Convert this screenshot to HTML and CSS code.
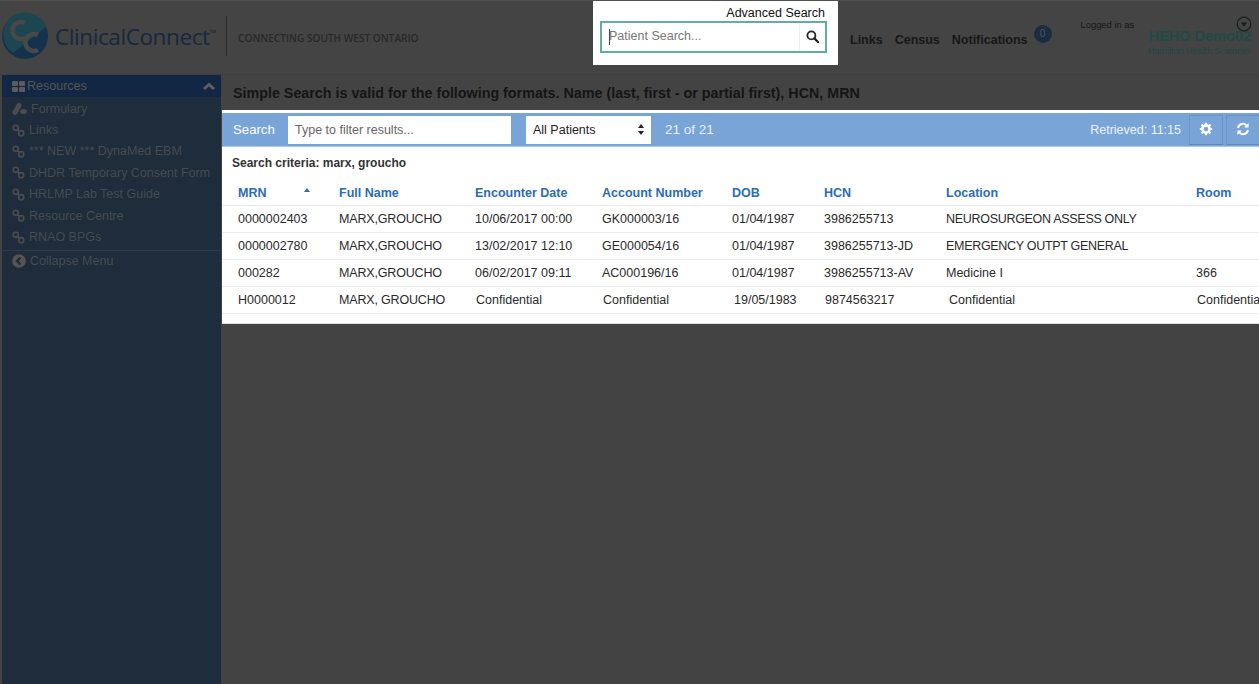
FILE: index.html
```html
<!DOCTYPE html>
<html lang="en">
<head>
    <meta charset="UTF-8">
    <title>ClinicalConnect</title>
    <link rel="stylesheet" href="styles.css">
</head>
<body>
    <header class="topbar">
        <div class="brand">
            <svg class="brand-logo" width="48" height="48" viewBox="0 0 48 48">
                <circle cx="24" cy="24" r="23" fill="#14324c"/>
                <path d="M8 7 A23 23 0 0 1 45 15 L12 41 A23 23 0 0 1 8 7Z" fill="#1c4750"/>
                <path d="M24 11 A8.5 8.5 0 1 0 24 26" fill="none" stroke="#484848" stroke-width="4.5"/>
                <path d="M37 23 A8.5 8.5 0 1 0 37 38" fill="none" stroke="#484848" stroke-width="4.5"/>
            </svg>
            <span class="brand-name">ClinicalConnect<sup>™</sup></span>
            <span class="brand-tag">CONNECTING SOUTH WEST ONTARIO</span>
        </div>

        <div class="search-box">
            <a class="advanced-link">Advanced Search</a>
            <div class="search-field">
                <span class="caret"></span>
                <input type="text" placeholder="Patient Search...">
                <button class="search-btn">
                    <svg width="13" height="13" viewBox="0 0 13 13"><circle cx="5.4" cy="5.4" r="4" fill="none" stroke="#222" stroke-width="1.8"/><path d="M8.4 8.4 L12 12" stroke="#222" stroke-width="2.2" stroke-linecap="round"/></svg>
                </button>
            </div>
        </div>

        <nav class="top-nav">
            <a>Links</a>
            <a>Census</a>
            <a>Notifications</a>
            <span class="badge">0</span>
        </nav>

        <div class="user">
            <span class="logged">Logged in as</span>
            <div class="user-info">
                <svg class="user-caret" width="16" height="16" viewBox="0 0 16 16"><circle cx="8" cy="8" r="6.8" fill="none" stroke="#1c1c1c" stroke-width="1.2"/><path d="M4.6 6.4 H11.4 L8 10.4Z" fill="#1c1c1c"/></svg>
                <span class="user-name">HEHO Demo02</span>
                <span class="user-org">Hamilton Health Sciences</span>
            </div>
        </div>
    </header>

    <div class="layout">
        <aside class="sidebar">
            <div class="side-head">
                <svg width="13" height="11" viewBox="0 0 13 11" fill="#5c5c5c"><rect width="6" height="5" rx="1"/><rect x="7" width="6" height="5" rx="1"/><rect y="6" width="6" height="5" rx="1"/><rect x="7" y="6" width="6" height="5" rx="1"/></svg>
                <span>Resources</span>
                <svg class="side-chevron" width="14" height="9" viewBox="0 0 14 9"><path d="M2 7 L7 2.5 L12 7" fill="none" stroke="#5f5f5f" stroke-width="3"/></svg>
            </div>
            <ul class="side-list">
                <li>
                    <svg width="15" height="13" viewBox="0 0 15 13" fill="#4c4c4c"><path d="M1 9 L5 2 A2.4 2.4 0 0 1 9 5 L5 12 A2.4 2.4 0 0 1 1 9Z"/><ellipse cx="11.5" cy="9.5" rx="3.4" ry="2.6"/></svg>
                    Formulary
                </li>
                <li><svg width="13" height="13" viewBox="0 0 13 13"><use href="#rings"/></svg>Links</li>
                <li><svg width="13" height="13" viewBox="0 0 13 13"><use href="#rings"/></svg>*** NEW *** DynaMed EBM</li>
                <li><svg width="13" height="13" viewBox="0 0 13 13"><use href="#rings"/></svg>DHDR Temporary Consent Form</li>
                <li><svg width="13" height="13" viewBox="0 0 13 13"><use href="#rings"/></svg>HRLMP Lab Test Guide</li>
                <li><svg width="13" height="13" viewBox="0 0 13 13"><use href="#rings"/></svg>Resource Centre</li>
                <li><svg width="13" height="13" viewBox="0 0 13 13"><use href="#rings"/></svg>RNAO BPGs</li>
            </ul>
            <div class="side-collapse">
                <svg width="14" height="14" viewBox="0 0 14 14"><circle cx="7" cy="7" r="6.8" fill="#545454"/><path d="M8.4 3.6 L5 7 L8.4 10.4" fill="none" stroke="#1f2c3b" stroke-width="2.2"/></svg>
                Collapse Menu
            </div>
        </aside>

        <main class="content">
            <h1 class="notice">Simple Search is valid for the following formats. Name (last, first - or partial first), HCN, MRN</h1>

            <section class="results">
                <div class="toolbar">
                    <span class="toolbar-label">Search</span>
                    <input class="filter" type="text" placeholder="Type to filter results...">
                    <div class="select">
                        All Patients
                        <svg width="6" height="11" viewBox="0 0 6 11" fill="#222"><path d="M3 0 L6 4 H0Z"/><path d="M3 11 L6 7 H0Z"/></svg>
                    </div>
                    <span class="count">21 of 21</span>
                    <span class="retrieved">Retrieved: 11:15</span>
                    <button class="tool-btn">
                        <svg width="14" height="14" viewBox="0 0 14 14"><circle cx="7" cy="7" r="3.6" fill="none" stroke="#fff" stroke-width="2.6"/><path d="M7 .8 V3 M7 11 V13.2 M.8 7 H3 M11 7 H13.2 M2.6 2.6 L4.2 4.2 M9.8 9.8 L11.4 11.4 M2.6 11.4 L4.2 9.8 M9.8 4.2 L11.4 2.6" stroke="#fff" stroke-width="2.2"/></svg>
                    </button>
                    <button class="tool-btn">
                        <svg width="14" height="14" viewBox="0 0 14 14" fill="none" stroke="#fff" stroke-width="2"><path d="M2 6 A5 5 0 0 1 11 4"/><path d="M12 8 A5 5 0 0 1 3 10"/><path d="M12.6 1 V5.4 H8.2Z" fill="#fff" stroke="none"/><path d="M1.4 13 V8.6 H5.8Z" fill="#fff" stroke="none"/></svg>
                    </button>
                </div>

                <p class="criteria">Search criteria: marx, groucho</p>

                <table class="grid">
                    <colgroup>
                        <col class="c-mrn"><col class="c-name"><col class="c-date"><col class="c-acct">
                        <col class="c-dob"><col class="c-hcn"><col class="c-loc"><col class="c-room">
                    </colgroup>
                    <thead>
                        <tr>
                            <th>MRN<svg class="sort-mark" width="6" height="4" viewBox="0 0 6 4" fill="#2a6db5"><path d="M3 0 L6 4 H0Z"/></svg></th>
                            <th>Full Name</th>
                            <th>Encounter Date</th>
                            <th>Account Number</th>
                            <th>DOB</th>
                            <th>HCN</th>
                            <th>Location</th>
                            <th>Room</th>
                        </tr>
                    </thead>
                    <tbody>
                        <tr>
                            <td>0000002403</td><td class="caps">MARX,GROUCHO</td><td>10/06/2017 00:00</td><td>GK000003/16</td>
                            <td>01/04/1987</td><td>3986255713</td><td class="caps-loc">NEUROSURGEON ASSESS ONLY</td><td></td>
                        </tr>
                        <tr>
                            <td>0000002780</td><td class="caps">MARX,GROUCHO</td><td>13/02/2017 12:10</td><td>GE000054/16</td>
                            <td>01/04/1987</td><td>3986255713-JD</td><td class="caps-loc">EMERGENCY OUTPT GENERAL</td><td></td>
                        </tr>
                        <tr>
                            <td>000282</td><td class="caps">MARX,GROUCHO</td><td>06/02/2017 09:11</td><td>AC000196/16</td>
                            <td>01/04/1987</td><td>3986255713-AV</td><td>Medicine I</td><td>366</td>
                        </tr>
                        <tr class="row-conf">
                            <td>H0000012</td><td class="caps">MARX, GROUCHO</td><td>Confidential</td><td>Confidential</td>
                            <td>19/05/1983</td><td>9874563217</td><td>Confidential</td><td>Confidential</td>
                        </tr>
                    </tbody>
                </table>
            </section>
        </main>
    </div>

    <svg width="0" height="0" class="defs">
        <defs>
            <g id="rings" fill="none" stroke="#4c4c4c" stroke-width="1.6">
                <circle cx="3.8" cy="3.8" r="2.6"/>
                <circle cx="9.2" cy="9.2" r="2.6"/>
                <path d="M5.5 5.5 L7.5 7.5"/>
            </g>
        </defs>
    </svg>
</body>
</html>
```

FILE: styles.css
```css
* {
    box-sizing: border-box;
}

html, body {
    height: 100%;
}

body {
    margin: 0;
    font-family: "Liberation Sans", Arial, sans-serif;
    background: #434343;
    color: #222;
    overflow: hidden;
    display: flex;
    flex-direction: column;
}

.defs {
    position: absolute;
}

/* Top bar */
.topbar {
    height: 75px;
    flex-shrink: 0;
    display: flex;
    align-items: flex-start;
    background: #444;
    border-top: 1px solid #505050;
    border-bottom: 1px solid #3e3e3e;
}

.brand {
    width: 593px;
    height: 70px;
    display: flex;
    align-items: center;
    padding-left: 1px;
}

.brand-logo {
    flex-shrink: 0;
}

.brand-name {
    margin-left: 6px;
    font-family: "Open Sans", sans-serif;
    font-size: 22.6px;
    letter-spacing: -0.45px;
    color: #17283f;
    white-space: nowrap;
}

.brand-name sup {
    font-size: 9px;
    vertical-align: 9px;
    line-height: 0;
    color: #262626;
}

.brand-tag {
    margin-left: 10px;
    height: 40px;
    padding-left: 11px;
    border-left: 1px solid #2b2b2b;
    line-height: 44px;
    font-family: "Open Sans", sans-serif;
    font-size: 10.1px;
    font-weight: 600;
    color: #282828;
    white-space: nowrap;
}

.search-box {
    width: 245px;
    height: 64px;
    background: #fff;
    padding: 5px 11px 0 7px;
    flex-shrink: 0;
}

.advanced-link {
    display: block;
    text-align: right;
    padding-right: 2px;
    font-size: 12.5px;
    line-height: 14px;
    color: #111;
}

.search-field {
    display: flex;
    height: 32px;
    margin-top: 1px;
    border: 2px solid #62ada3;
    position: relative;
}

.search-field input {
    flex: 1;
    min-width: 0;
    border: none;
    outline: none;
    padding: 0 0 2px 7px;
    font: 12.5px "Liberation Sans", Arial, sans-serif;
}

.search-field input::placeholder {
    color: #777;
}

.caret {
    position: absolute;
    left: 7px;
    top: 6px;
    width: 1px;
    height: 16px;
    background: #444;
}

.search-btn {
    width: 26px;
    padding: 1px 0 0;
    border: none;
    border-left: 1px solid #eee;
    background: #fff;
}

.top-nav {
    display: flex;
    align-items: flex-start;
    margin-left: 12px;
    padding-top: 24px;
    font-size: 12.5px;
    font-weight: bold;
    color: #171717;
    white-space: nowrap;
}

.top-nav a {
    margin-right: 12px;
    line-height: 30px;
    height: 30px;
}

.top-nav a:nth-child(3) {
    margin-right: 6px;
}

.badge {
    width: 18px;
    height: 18px;
    border-radius: 50%;
    background: #1a2c40;
    color: #555;
    font-size: 10px;
    font-weight: normal;
    line-height: 18px;
    text-align: center;
}

.user {
    display: flex;
    margin-left: 29px;
    padding-top: 18px;
    flex: 1;
    min-width: 0;
}

.logged {
    font-size: 9.4px;
    line-height: 12px;
    color: #171717;
    white-space: nowrap;
}

.user-info {
    margin-left: auto;
    padding-right: 8px;
    margin-top: -2px;
    display: flex;
    flex-direction: column;
    align-items: flex-end;
    position: relative;
}

.user-caret {
    position: absolute;
    top: -1px;
    right: 7px;
}

.user-name {
    margin-top: 11px;
    font-size: 14.5px;
    font-weight: bold;
    line-height: 16px;
    color: #1e4a4a;
    white-space: nowrap;
}

.user-org {
    margin-top: 2px;
    font-size: 9px;
    line-height: 11px;
    color: #1e4646;
    white-space: nowrap;
}

/* Sidebar and main */
.layout {
    flex: 1;
    display: flex;
    min-height: 0;
}

.sidebar {
    width: 219px;
    margin-left: 2px;
    flex-shrink: 0;
    background: #1f2c3b;
}

.side-head {
    height: 22px;
    display: flex;
    align-items: center;
    gap: 2px;
    padding: 0 5px 0 10px;
    background: #112743;
    font-size: 12.5px;
    color: #555;
}

.side-chevron {
    margin-left: auto;
}

.side-list {
    list-style: none;
    margin: 0;
    padding: 1px 0 2px;
    border-bottom: 1px solid #2b3949;
}

.side-list li {
    height: 21.4px;
    display: flex;
    align-items: center;
    gap: 4px;
    padding-left: 10px;
    font-size: 12.5px;
    color: #464b50;
    white-space: nowrap;
}

.side-collapse {
    display: flex;
    align-items: center;
    gap: 4px;
    height: 20px;
    padding-left: 10px;
    font-size: 12.5px;
    color: #464b50;
}

.content {
    flex: 1;
    min-width: 0;
    padding-left: 1px;
}

.notice {
    margin: 0;
    height: 35px;
    padding: 9px 0 0 11px;
    font-size: 14.3px;
    line-height: 18px;
    color: #151515;
    white-space: nowrap;
}

/* Results card */
.results {
    height: 214px;
    background: #fff;
    padding-top: 3px;
    overflow: hidden;
    border-bottom: 1px solid #ddd;
}

.toolbar {
    height: 34px;
    display: flex;
    align-items: center;
    background: #78a4d8;
    border-bottom: 1px solid #a9c9e0;
    color: #fff;
    font-size: 12.5px;
    padding-left: 11px;
}

.toolbar-label {
    font-size: 13.2px;
    width: 55px;
}

.filter {
    width: 223px;
    height: 28px;
    border: none;
    padding: 0 7px;
    font: 12.5px "Liberation Sans", Arial, sans-serif;
}

.filter::placeholder {
    color: #666;
}

.select {
    width: 125px;
    height: 28px;
    margin-left: 15px;
    padding: 0 7px;
    display: flex;
    align-items: center;
    justify-content: space-between;
    background: #fff;
    color: #222;
}

.count {
    margin-left: 14px;
    font-size: 13.5px;
    color: #e8f0fa;
}

.retrieved {
    margin-left: auto;
    margin-right: 8px;
    color: #eef3fa;
}

.tool-btn {
    width: 34px;
    height: 30px;
    margin-right: 3px;
    padding: 2px 0 0;
    background: #78a4d8;
    border: 1px solid #6a94c8;
    border-bottom-color: #5f88bb;
}

.tool-btn:last-child {
    margin-right: -1px;
}

.criteria {
    margin: 9px 0 0 10px;
    font-size: 12px;
    font-weight: bold;
    line-height: 14px;
    color: #333;
}

.grid {
    margin-top: 7px;
    width: 1037px;
    table-layout: fixed;
    border-collapse: collapse;
    font-size: 12.5px;
    white-space: nowrap;
}

.c-mrn { width: 101px; }
.c-name { width: 136px; }
.c-date { width: 127px; }
.c-acct { width: 130px; }
.c-dob { width: 92px; }
.c-hcn { width: 122px; }
.c-loc { width: 250px; }
.c-room { width: 79px; }

.grid th {
    height: 28px;
    padding: 4px 0 0 16px;
    text-align: left;
    font-weight: bold;
    color: #2a6db5;
    border-bottom: 1px solid #e8e8e8;
    position: relative;
}

.sort-mark {
    position: absolute;
    left: 82px;
    top: 11px;
}

.grid td {
    height: 27px;
    padding: 1px 0 0 16px;
    color: #2a2a2a;
    border-bottom: 1px solid #ececec;
    overflow: hidden;
}

.grid .caps {
    letter-spacing: -0.17px;
}

.grid .caps-loc {
    letter-spacing: -0.3px;
}

.row-conf td:nth-child(n+3) {
    padding-left: 17px;
}

.row-conf td:nth-child(5) {
    padding-left: 18px;
}

.row-conf td:nth-child(7) {
    padding-left: 19px;
}
```
